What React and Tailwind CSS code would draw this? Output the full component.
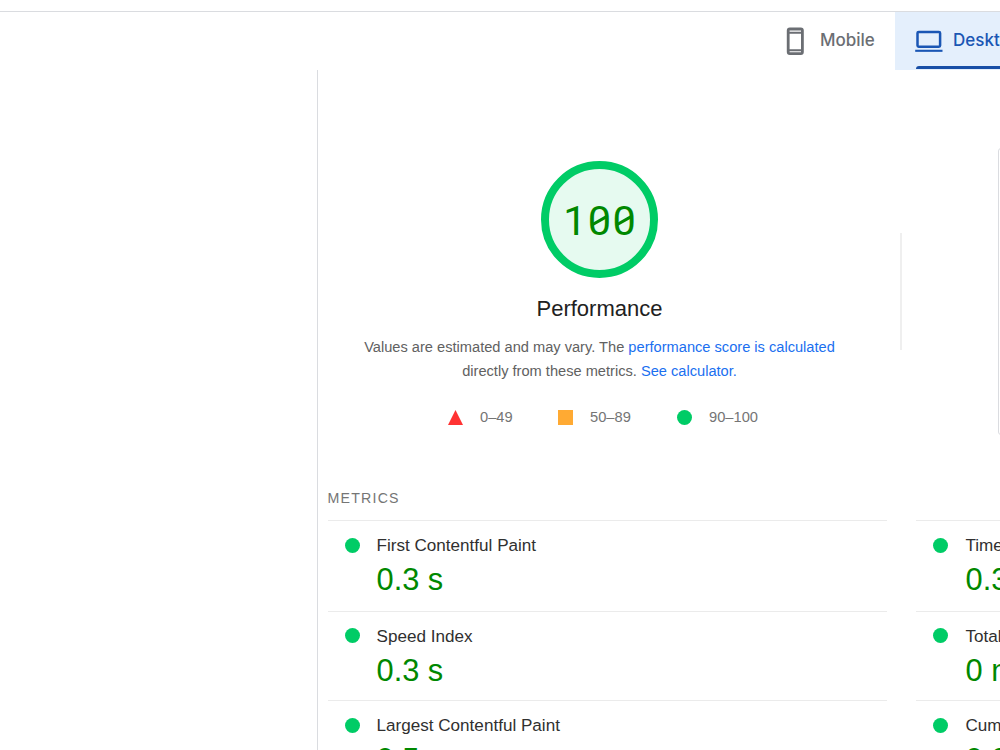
import React from "react";

const metrics = [
  { name: "First Contentful Paint", value: "0.3 s", row: "h-[91px]", dot: "mt-[17px]", text: "ml-[17px]" },
  { name: "Time to Interactive", value: "0.3 s", row: "h-[91px]", dot: "mt-[17px]", text: "ml-[18px]" },
  { name: "Speed Index", value: "0.3 s", row: "h-[89px]", dot: "mt-[16px]", text: "ml-[17px]" },
  { name: "Total Blocking Time", value: "0 ms", row: "h-[89px]", dot: "mt-[16px]", text: "ml-[18px]" },
  { name: "Largest Contentful Paint", value: "0.5 s", row: "h-[90px]", dot: "mt-[17px]", text: "ml-[17px]" },
  { name: "Cumulative Layout Shift", value: "0.001", row: "h-[90px]", dot: "mt-[17px]", text: "ml-[18px]" },
];

function Tabs() {
  return (
    <div className="flex h-[59px] justify-end border-t border-[#dadce0]">
      <div className="flex w-[110px] shrink-0 items-center pb-[1px] text-[17px] font-medium text-[#6b6e73]">
        <svg width="20" height="28" viewBox="0 0 20 28" className="shrink-0" fill="none" stroke="#6b6e73">
          <rect x="3.2" y="2" width="14.2" height="24.6" rx="1.6" strokeWidth="2.8" />
          <path d="M3 5.8h14.6M3 23.2h14.6" strokeWidth="2" />
        </svg>
        <span className="ml-[15px]">Mobile</span>
      </div>
      <div className="relative flex w-[105px] shrink-0 items-center overflow-hidden bg-[#e4effc] pb-[1px] text-[17px] font-medium text-[#1a56b4]">
        <svg width="28" height="24" viewBox="0 0 28 24" className="ml-[20px] shrink-0" fill="none" stroke="#1a56b4">
          <rect x="2.5" y="2.9" width="22.6" height="14.9" rx="1.2" strokeWidth="2.5" />
          <path d="M0.2 21.8h27.3" strokeWidth="2.1" />
        </svg>
        <span className="ml-[10px]">Desktop</span>
        <div className="absolute bottom-[1px] left-[21px] h-[3px] w-[110px] rounded-tl-[3px] bg-[#174ea6]"></div>
      </div>
    </div>
  );
}

function Gauge() {
  return (
    <div className="relative flex h-[117px] w-[117px] items-center justify-center rounded-full border-[8px] border-[#0c6] bg-[#e6faf0]">
      <div className="flex pt-[3px] font-[Roboto] text-[41.5px] leading-[48px] text-[#080]">
        <span className="w-[24.6px] text-center">1</span>
        <span className="w-[24.6px] text-center">0</span>
        <span className="w-[24.6px] text-center">0</span>
      </div>
      {/* slashes of the zeros */}
      <svg width="101" height="101" viewBox="0 0 101 101" className="absolute inset-0" stroke="#080" strokeWidth="3.1">
        <path d="M42.8 56L58 47.3M67.4 56L82.6 47.3" />
      </svg>
    </div>
  );
}

function Legend() {
  return (
    <div className="mt-[22px] ml-[7px] flex h-[24px] items-center text-[14.7px] text-[#757575]">
      <svg width="15" height="15" viewBox="0 0 15 15">
        <path d="M7.5 0L15 15H0z" fill="#f33" />
      </svg>
      <span className="ml-[17px] w-[78px]">0–49</span>
      <span className="h-[15px] w-[15px] bg-[#fa3]"></span>
      <span className="ml-[17px] w-[87px]">50–89</span>
      <span className="h-[15px] w-[15px] rounded-full bg-[#0c6]"></span>
      <span className="ml-[17px]">90–100</span>
    </div>
  );
}

function Metric({ name, value, row, dot, text }) {
  return (
    <div className={`flex border-t border-[#ebebeb] pl-[16.5px] ${row}`}>
      <div className={`h-[15px] w-[15px] shrink-0 rounded-full bg-[#0c6] ${dot}`}></div>
      <div className={`pt-[12px] ${text}`}>
        <div className="text-[17.1px] leading-[25px] whitespace-nowrap text-[#303030]">{name}</div>
        <div className="mt-[2px] text-[30.8px] leading-[40px] whitespace-nowrap text-[#080]">{value}</div>
      </div>
    </div>
  );
}

function App() {
  return (
    <div className="h-[750px] w-[1000px] overflow-hidden bg-white pt-[11px] font-['Liberation_Sans',Arial,sans-serif]">
      <div className="font-['Inter',sans-serif]">
        <Tabs />
      </div>
      <div className="ml-[317px] h-[680px] overflow-hidden border-l border-[#dadce0]">
        <div className="flex h-[411px]">
          <div className="flex w-[563px] shrink-0 flex-col items-center pt-[90.5px]">
            <Gauge />
            <div className="mt-[17.5px] text-[22px] leading-[28px] text-[#212121]">Performance</div>
            <p className="mt-[12px] text-center text-[14.64px] leading-[24px] whitespace-nowrap text-[#616161]">
              Values are estimated and may vary. The <span className="text-[#1a6ff0]">performance score is calculated</span>
              <br />
              directly from these metrics. <span className="text-[#1a6ff0]">See calculator.</span>
            </p>
            <Legend />
          </div>
          <div className="mt-[163px] ml-[19px] h-[117px] w-[2px] shrink-0 bg-[#efefef]"></div>
          <div className="mt-[78px] ml-[96px] h-[287px] w-[200px] shrink-0 rounded-[3px] border border-[#dadce0]"></div>
        </div>
        <div className="ml-[9.5px] flex h-[39px] items-start pt-[7px] text-[14.2px] leading-[20px] tracking-[1.2px] text-[#757575]">
          METRICS
        </div>
        <div className="ml-[10px] grid w-[1148px] grid-cols-[559px_560px] gap-x-[29px]">
          {metrics.map((metric) => (
            <Metric key={metric.name} {...metric} />
          ))}
        </div>
      </div>
    </div>
  );
}

export default App;
